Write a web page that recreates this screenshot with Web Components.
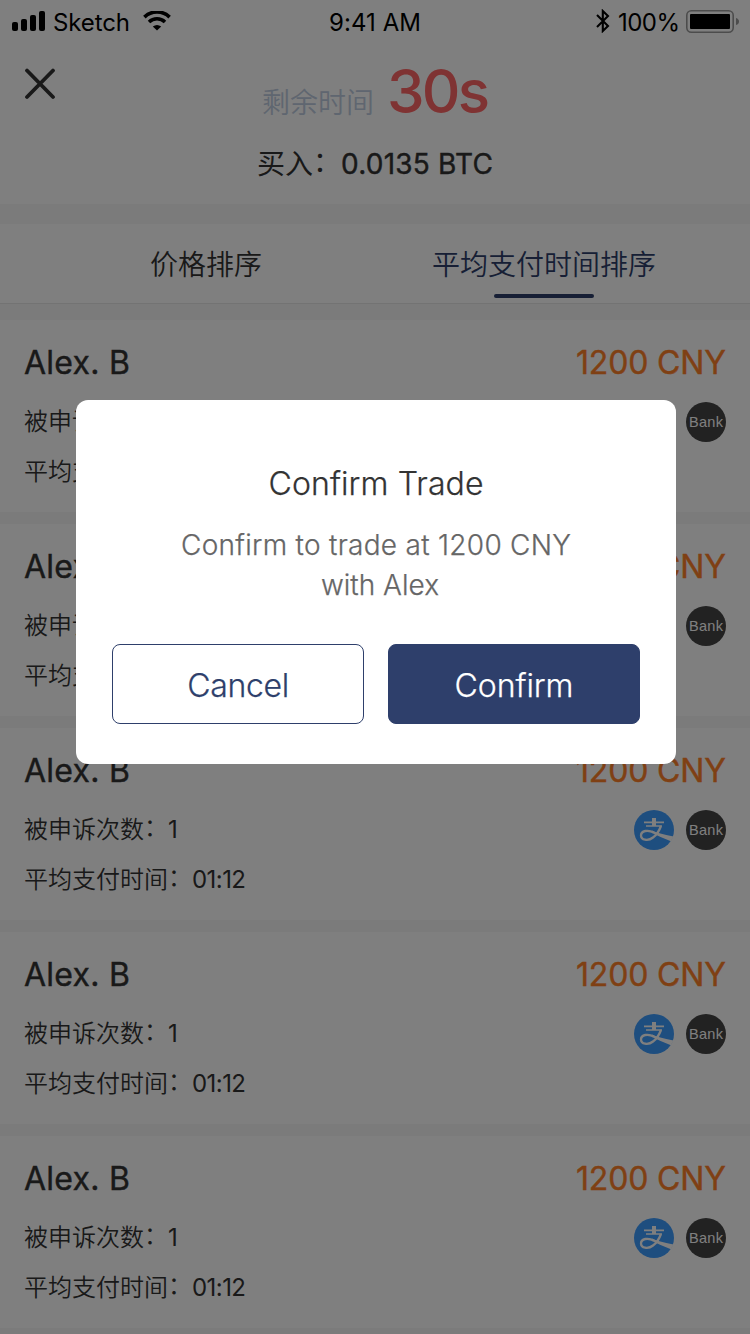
<!DOCTYPE html>
<html lang="zh-CN"><head><meta charset="utf-8"><title>Confirm Trade</title>
<style>html,body{margin:0;height:1334px;overflow:hidden}body{background:#f7f7f7;font-family:Inter,"Noto Sans CJK SC",sans-serif;color:#333}</style></head>
<body><trade-screen></trade-screen>
<script>
const define=(name,html,init)=>{const t=document.createElement('template');t.innerHTML=html;customElements.define(name,class extends HTMLElement{connectedCallback(){if(this.shadowRoot)return;this.attachShadow({mode:'open'}).append(t.content.cloneNode(true));init&&init(this,this.shadowRoot)}})};

// Text tracked out to a given advance width
define('tracked-text',`<style>:host{display:inline-block;white-space:nowrap}span{display:inline-block}</style><span><slot></slot></span>`,(el,r)=>{
 const s=r.querySelector('span'),w=+el.getAttribute('w'),n=[...el.textContent].length;
 el.style.width=w+'px';if(n>1)s.style.letterSpacing=((w-s.getBoundingClientRect().width)/(n-1))+'px';
});
// Label followed by a full-width colon
define('field-label',`<style>:host{display:flex}.c{width:1em;margin-top:-2px}</style><span><slot></slot></span><span class="c">：</span>`);
define('status-bar',`<style>:host{display:grid;grid-template-columns:1fr auto 1fr;height:44px;align-items:center;color:#000;font-size:24px;line-height:46px}
.l,.r{display:flex;align-items:center;height:44px}.l{padding-left:12px}.r{justify-content:flex-end;padding-right:11px}svg{display:block;flex:none}.sig{margin:-5px 8px 0 0}.wifi{margin:-5px 0 0 13px}.bt{margin:-4px 8px 0 0}.bat{margin:-4px 0 0 6px}</style>
<div class="l"><svg class="sig" width="33" height="20"><rect y="11" width="6" height="9" rx="2"/><rect x="9" y="8" width="6" height="12" rx="2"/><rect x="18" y="4" width="6" height="16" rx="2"/><rect x="27" width="6" height="20" rx="2"/></svg><tracked-text w="77">Sketch</tracked-text>
<svg class="wifi" width="28" height="20" viewBox="0 0 28 20"><path d="M1.400 6.100a18 18 0 0 1 25.200 0M6 11a11.600 11.600 0 0 1 16 0" fill="none" stroke="#000" stroke-width="3.600"/><path d="M9.800 15.400q4.200-3 8.400 0L14 19.600z"/></svg></div>
<tracked-text w="92">9:41 AM</tracked-text>
<div class="r"><svg class="bt" width="14" height="24" viewBox="0 0 14 24"><path d="M1 6l11 11-5.200 5V2L12 7 1 18" fill="none" stroke="#000" stroke-width="2.100"/></svg><tracked-text w="62">100%</tracked-text>
<svg class="bat" width="53" height="23" viewBox="0 0 53 23"><rect x=".8" y=".8" width="46.400" height="21.400" rx="4.500" fill="none" stroke="#999" stroke-width="1.600"/><rect x="4" y="4" width="40" height="15" rx="1"/><path d="M50 8q3 1 3 3.500T50 15z" fill="#999"/></svg></div>`);
define('trade-header',`<style>:host{display:grid;grid-template-columns:80px 1fr 80px;height:160px;background:#fff;align-items:start}
svg{margin:24px 0 0 24px;display:block}.mid{display:flex;flex-direction:column;align-items:center}.time{display:flex;align-items:baseline;gap:13px;height:90px;line-height:94px;padding-left:2px;color:#becce0;font-size:28px;font-weight:350}.sec{font-size:60px;font-weight:500;color:#f66}.buy{font-size:28px;line-height:61px;display:flex}.buy tracked-text{-webkit-text-stroke:.4px}</style>
<svg width="32" height="32"><path d="M3 2.500 29 29M29 2.500 3 29" stroke="#333" stroke-width="3.800" stroke-linecap="round"/></svg>
<div class="mid"><div class="time"><span>剩余时间</span><tracked-text class="sec" w="103">30s</tracked-text></div><div class="buy"><field-label>买入</field-label><tracked-text w="152">0.0135 BTC</tracked-text></div></div>`);
define('sort-tabs',`<style>:host{display:grid;grid-template-columns:1fr 1fr;box-sizing:border-box;height:80px;margin-top:20px;background:#fff;border-bottom:1px solid #e6e6e6;padding:0 37px;font-size:28px;font-weight:350}
div{display:flex;flex-direction:column;align-items:center;line-height:82px}.on{color:#2e3f6b}.on i{display:block;width:100px;height:4px;margin-top:-12px;border-radius:2px;background:#2e3f6b}</style><div>价格排序</div><div class="on">平均支付时间排序<i></i></div>`);
define('pay-icons',`<style>:host{display:flex;gap:12px}svg{display:block}.bank{width:40px;height:40px;border-radius:50%;background:#444;color:#fff;display:flex;align-items:center;justify-content:center;font:14.5px/40px "Liberation Sans",sans-serif}</style>
<svg width="40" height="40" viewBox="0 0 40 40"><circle cx="20" cy="20" r="20" fill="#3d9cff"/><g fill="none" stroke="#fff"><path d="M20 8v8" stroke-width="4"/><path d="M10 12.300h20M12 16h16" stroke-width="1.700"/><path d="M27 16q-3 8-8 11.500C14 31.500 7 30 7 25.500c0-5 7-6 13-3" stroke-width="2.300"/></g><path d="M18 20.500q6 3 21.500 6l-2.600 4.700Q27 27.500 18 23z" fill="#fff"/></svg><div class="bank"><tracked-text w="34">Bank</tracked-text></div>`);
define('offer-card',`<style>:host{display:block;box-sizing:border-box;height:192px;background:#fff;padding:18px 24px 0;margin-bottom:12px;font-size:24px;font-weight:350}
.row{display:flex;align-items:center;justify-content:space-between;height:50px;line-height:50px}.name{font-size:32px;font-weight:400;margin-bottom:9px;line-height:52px;-webkit-text-stroke:.4px}.price{color:#ff8029}.kv{display:flex;height:50px}.kv tracked-text{font-weight:400}</style>
<div class="row name"><tracked-text w="106">Alex. B</tracked-text><tracked-text class="price" w="150">1200 CNY</tracked-text></div>
<div class="row"><div class="kv"><field-label>被申诉次数</field-label><tracked-text w="10">1</tracked-text></div><pay-icons></pay-icons></div>
<div class="row"><div class="kv"><field-label>平均支付时间</field-label><tracked-text w="54">01:12</tracked-text></div></div>`);
define('confirm-dialog',`<style>:host{display:flex;flex-direction:column;align-items:center;box-sizing:border-box;width:600px;height:364px;margin:400px 0 0 76px;padding:58px 36px 40px;border-radius:12px;background:#fff;-webkit-text-stroke:.25px}
.t{font-size:32px;line-height:50px;height:50px;padding-top:1px;box-sizing:border-box}.m{display:flex;flex-direction:column;align-items:center;margin-top:17px;font-size:28px;line-height:40px;color:#666}.m :last-child{padding-left:8px}.b{display:flex;gap:24px;margin-top:39px}
button{box-sizing:border-box;width:252px;height:80px;border:1px solid #2e3f6b;border-radius:8px;background:#fff;color:#2e3f6b;font:32px Inter,sans-serif;padding:2px 0 0}.ok{background:#2e3f6b;color:#fff}.t,.m,button{font-weight:350}</style>
<div class="t"><tracked-text w="215">Confirm Trade</tracked-text></div><div class="m"><tracked-text w="390">Confirm to trade at 1200 CNY</tracked-text><tracked-text w="118">with Alex</tracked-text></div>
<div class="b"><button><tracked-text w="102">Cancel</tracked-text></button><button class="ok"><tracked-text w="119">Confirm</tracked-text></button></div>`);
define('trade-screen',`<style>:host{display:block;width:750px;height:1334px;overflow:hidden;position:relative}status-bar{background:#fff}.list{padding-top:16px}.mask{position:absolute;inset:0;background:rgba(0,0,0,.5);overflow:hidden;display:flex;align-items:flex-start}</style>
<status-bar></status-bar><trade-header></trade-header><sort-tabs></sort-tabs><div class="list">${'<offer-card></offer-card>'.repeat(5)}</div><div class="mask"><confirm-dialog></confirm-dialog></div>`);
</script></body></html>
